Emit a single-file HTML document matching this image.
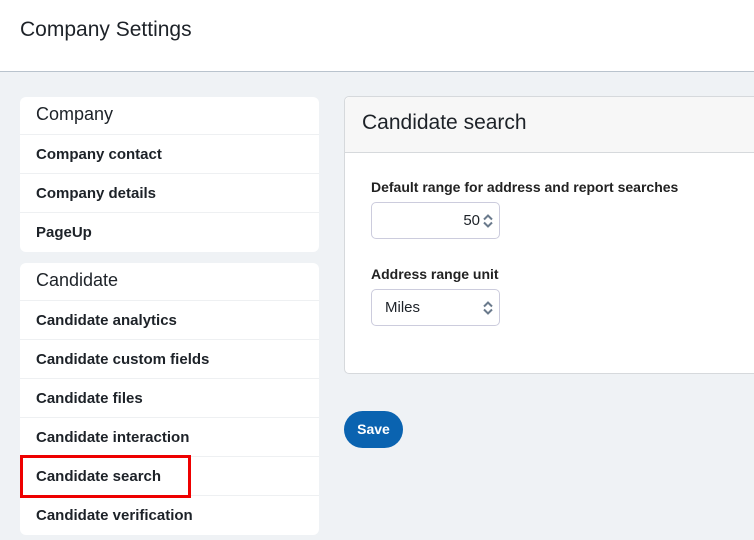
<!DOCTYPE html><html><head><style>
*{box-sizing:border-box;margin:0;padding:0}
body{width:754px;height:540px;overflow:hidden;background:#eff2f5;font-family:"Liberation Sans",sans-serif;color:#1d2228;position:relative}
.hdr{position:absolute;left:0;top:0;width:754px;height:72px;background:#fff;border-bottom:1px solid #b9c3cd}
.hdr h1{position:absolute;left:20px;top:18px;font-size:21px;font-weight:normal}
.card{position:absolute;left:20px;width:299px;background:#fff;border-radius:6px}
.card .t{height:38px;padding:7px 16px;font-size:18px;border-bottom:1px solid #eef0f2}
.card .r{height:39px;padding:11px 16px;font-size:15px;font-weight:bold;border-bottom:1px solid #eef0f2}
.card .r:last-child{border-bottom:none}
.red{position:absolute;left:20px;top:455px;width:171px;height:43px;border:3px solid #e00}
.panel{position:absolute;left:344px;top:96px;width:420px;height:278px;background:#fff;border:1px solid #d6d9dc;border-radius:5px}
.panel .ph{height:56px;background:#f7f7f7;border-bottom:1px solid #d6d9dc;padding:14px 17px;font-size:21px;border-radius:5px 5px 0 0}
.lbl{position:absolute;left:26px;font-size:14px;font-weight:bold;color:#222}
.inp{position:absolute;left:26px;width:129px;height:37px;border:1px solid #ccd;border-radius:5px;font-size:15px}
.btn{position:absolute;left:344px;top:411px;width:59px;height:37px;background:#0a63b0;border-radius:19px;color:#fff;font-weight:bold;font-size:14px;text-align:center;line-height:37px}
</style></head><body>
<div class="hdr"><h1>Company Settings</h1></div>
<div class="card" style="top:97px"><div class="t">Company</div><div class="r">Company contact</div><div class="r">Company details</div><div class="r">PageUp</div></div>
<div class="card" style="top:263px;height:272px"><div class="t">Candidate</div><div class="r">Candidate analytics</div><div class="r">Candidate custom fields</div><div class="r">Candidate files</div><div class="r">Candidate interaction</div><div class="r">Candidate search</div><div class="r">Candidate verification</div></div>
<div class="red"></div>
<div class="panel"><div class="ph">Candidate search</div>
<div class="lbl" style="top:82px">Default range for address and report searches</div>
<div class="inp" style="top:105px"><span style="position:absolute;right:19px;top:9px">50</span><svg style="position:absolute;right:5px;top:10px" width="12" height="16" viewBox="0 0 12 16"><path d="M2 6.5 6 2.5 10 6.5M2 9.5 6 13.5 10 9.5" fill="none" stroke="#6a7a8c" stroke-width="2"/></svg></div>
<div class="lbl" style="top:169px">Address range unit</div>
<div class="inp" style="top:192px"><span style="position:absolute;left:13px;top:9px">Miles</span><svg style="position:absolute;right:5px;top:10px" width="12" height="16" viewBox="0 0 12 16"><path d="M2 6.5 6 2.5 10 6.5M2 9.5 6 13.5 10 9.5" fill="none" stroke="#6a7a8c" stroke-width="2"/></svg></div>
</div>
<div class="btn">Save</div>
</body></html>
